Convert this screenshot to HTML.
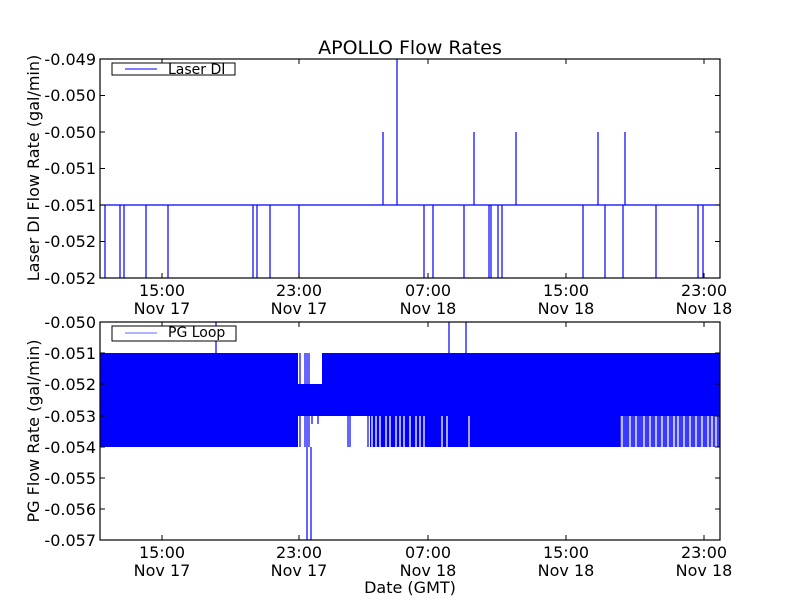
<!DOCTYPE html>
<html><head><meta charset="utf-8"><style>body{margin:0;background:#fff}svg{display:block}</style></head><body>
<svg width="800" height="600" xmlns="http://www.w3.org/2000/svg" font-family="DejaVu Sans, Liberation Sans, sans-serif" font-size="16">
<rect width="800" height="600" fill="#fff"/>
<text x="410" y="54" text-anchor="middle" font-size="19">APOLLO Flow Rates</text>
<!-- TOP PLOT -->
<g stroke="#00f" stroke-width="1.2" fill="none">
<line x1="100" y1="205" x2="720" y2="205"/>
<path d="M105 205V278M120 205V278M124 205V278M146 205V278M168 205V278M253 205V278M257 205V278M270 205V278M299 205V278M424 205V278M433 205V278M464 205V278M489 205V278M491 205V278M498 205V278M502 205V278M583 205V278M605 205V278M623 205V278M656 205V278M698 205V278M703 205V278"/>
<path d="M383 205V132M474 205V132M516 205V132M598 205V132M625 205V132M397 205V59"/>
</g>
<rect x="100" y="59" width="620" height="219" fill="none" stroke="#000" stroke-width="1.2"/>
<g stroke="#000">
<path d="M100 59h5M100 95.5h5M100 132h5M100 168.5h5M100 205h5M100 241.5h5M100 278h5M720 59h-5M720 95.5h-5M720 132h-5M720 168.5h-5M720 205h-5M720 241.5h-5M720 278h-5"/>
<path d="M162 278v-5M299 278v-5M428 278v-5M566 278v-5M704 278v-5M162 59v5M299 59v5M428 59v5M566 59v5M704 59v5"/>
</g>
<g text-anchor="end">
<text x="96" y="65">-0.049</text><text x="96" y="101">-0.050</text><text x="96" y="138">-0.050</text><text x="96" y="174">-0.051</text><text x="96" y="211">-0.051</text><text x="96" y="247">-0.052</text><text x="96" y="284">-0.052</text>
</g>
<g text-anchor="middle">
<text x="162" y="296">15:00</text><text x="162" y="314">Nov 17</text>
<text x="299" y="296">23:00</text><text x="299" y="314">Nov 17</text>
<text x="428" y="296">07:00</text><text x="428" y="314">Nov 18</text>
<text x="566" y="296">15:00</text><text x="566" y="314">Nov 18</text>
<text x="704" y="296">23:00</text><text x="704" y="314">Nov 18</text>
</g>
<text transform="translate(39,168) rotate(-90)" text-anchor="middle">Laser DI Flow Rate (gal/min)</text>
<rect x="112" y="63" width="123" height="12" fill="#fff" stroke="#000" stroke-width="1"/>
<line x1="125" y1="69" x2="157" y2="69" stroke="#00f"/>
<text x="168" y="74" font-size="14">Laser DI</text>
<!-- BOTTOM PLOT -->
<g fill="#00f">
<rect x="100" y="353" width="198" height="94"/>
<rect x="298" y="384" width="24" height="32"/>
<rect x="322" y="353" width="398" height="63"/>
<rect x="370" y="416" width="250" height="31"/>
<rect x="620" y="416" width="100" height="31" fill="#3a3aff"/>
</g>
<g stroke="#fff" stroke-width="1.3">
<path d="M372 416v31M376 416v31M380 416v31M386 416v31M390 416v31M396 416v31M400 416v31M404 416v31M410 416v31M416 416v31M420 416v31M424 416v31M442 416v31M447 416v31M469 416v31M622 416v31M630 416v31M636 416v31M644 416v31M650 416v31M656 416v31M662 416v31M668 416v31M674 416v31M678 416v31M684 416v31M690 416v31M696 416v31M702 416v31M708 416v31M712 416v31M716 416v31"/>
</g>
<g stroke="#00f" stroke-width="1.2">
<path d="M300 353v94M305 353v94M307 353v94M309 353v94M312 384v40M318 384v40M348 416v31M350 416v31M368 416v31M216 353v-31M449 353v-31M466 353v-31"/>
<path d="M307 447v93M311 447v93"/>
</g>
<rect x="100" y="322" width="620" height="218" fill="none" stroke="#000" stroke-width="1.2"/>
<g stroke="#000">
<path d="M100 322h5M100 353h5M100 384h5M100 416h5M100 447h5M100 478h5M100 509h5M100 540h5M720 322h-5M720 353h-5M720 384h-5M720 416h-5M720 447h-5M720 478h-5M720 509h-5M720 540h-5"/>
<path d="M162 540v-5M299 540v-5M428 540v-5M566 540v-5M704 540v-5M162 322v5M299 322v5M428 322v5M566 322v5M704 322v5"/>
</g>
<g text-anchor="end">
<text x="96" y="328">-0.050</text><text x="96" y="359">-0.051</text><text x="96" y="390">-0.052</text><text x="96" y="422">-0.053</text><text x="96" y="453">-0.054</text><text x="96" y="484">-0.055</text><text x="96" y="515">-0.056</text><text x="96" y="546">-0.057</text>
</g>
<g text-anchor="middle">
<text x="162" y="558">15:00</text><text x="162" y="576">Nov 17</text>
<text x="299" y="558">23:00</text><text x="299" y="576">Nov 17</text>
<text x="428" y="558">07:00</text><text x="428" y="576">Nov 18</text>
<text x="566" y="558">15:00</text><text x="566" y="576">Nov 18</text>
<text x="704" y="558">23:00</text><text x="704" y="576">Nov 18</text>
<text x="410" y="593">Date (GMT)</text>
</g>
<text transform="translate(39,431) rotate(-90)" text-anchor="middle">PG Flow Rate (gal/min)</text>
<rect x="112" y="326" width="124" height="15" fill="#fff" stroke="#000" stroke-width="1"/>
<line x1="125" y1="333" x2="157" y2="333" stroke="#99f" stroke-width="1.5"/>
<text x="168" y="337" font-size="14">PG Loop</text>
</svg>
</body></html>
